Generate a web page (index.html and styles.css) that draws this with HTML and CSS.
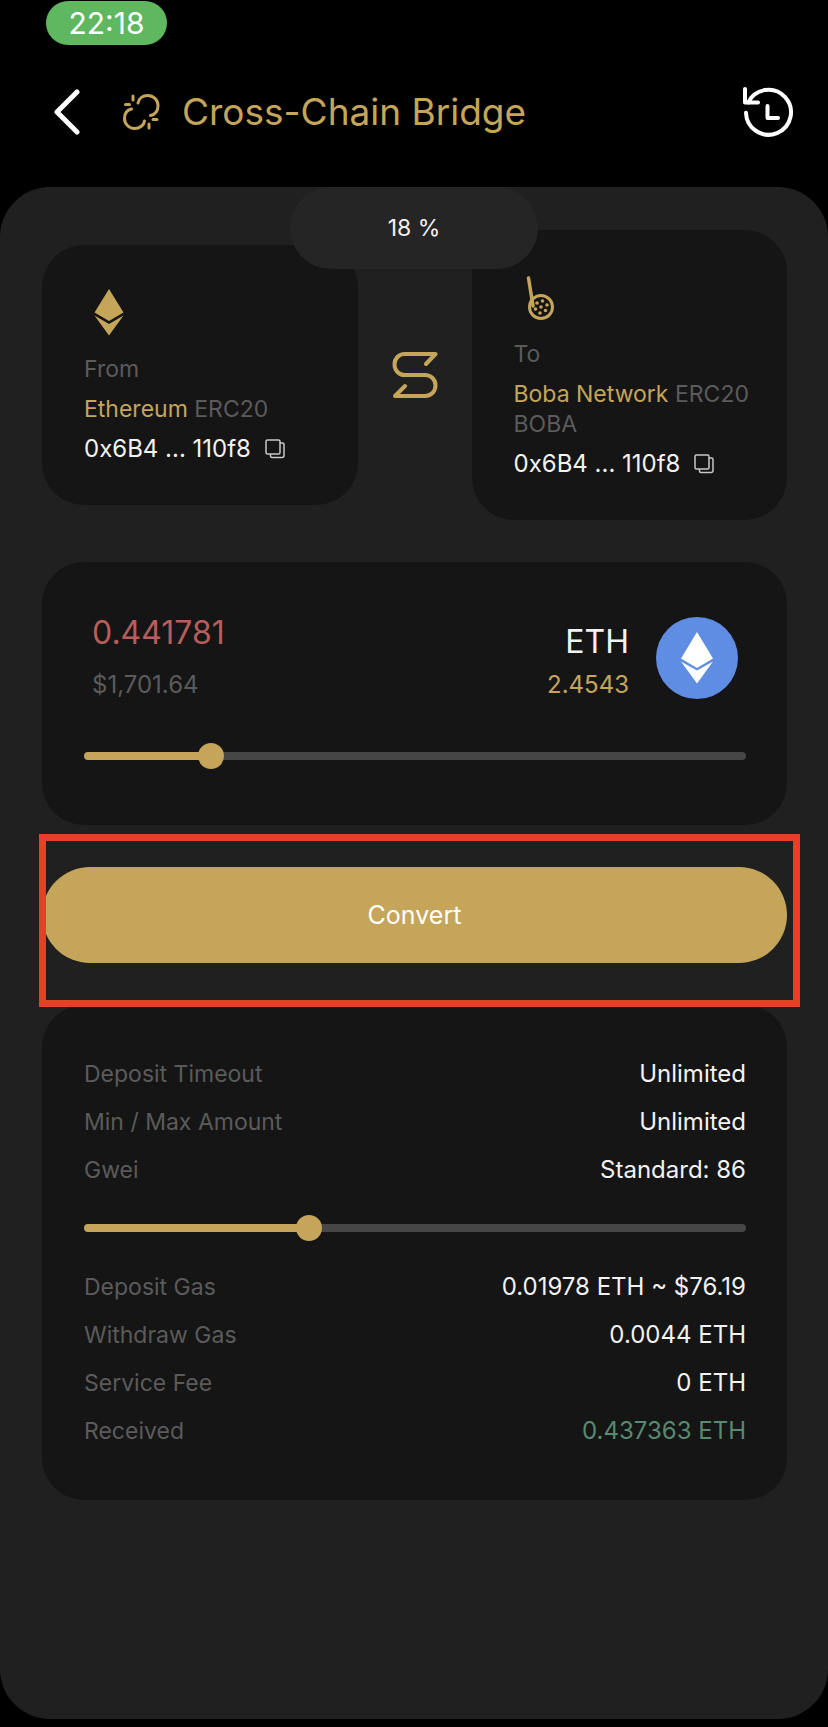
FILE: index.html
```
<!DOCTYPE html>
<html lang="en">
<head>
<meta charset="utf-8">
<meta name="viewport" content="width=device-width, initial-scale=1">
<title>Cross-Chain Bridge</title>
<link rel="stylesheet" href="styles.css">
</head>
<body>
<div class="status-bar"><time class="clock">22:18</time></div>
<header class="header">
  <button class="icon-button" type="button" aria-label="Back">
    <svg width="26" height="46" viewBox="0 0 26 46" fill="none" stroke="#fff" stroke-width="5" stroke-linecap="round" stroke-linejoin="round"><path d="M23 3 3 23l20 20"/></svg>
  </button>
  <svg class="link-icon" width="38" height="38" viewBox="0 0 38 38" fill="none" stroke="#c5a55a" stroke-width="3" stroke-linecap="round" aria-hidden="true">
    <path d="M16 10C17 5 21 2.500 25.500 2.500C31.500 2.500 36 7 36 12.500C36 18 33 21.500 28.500 22.500"/>
    <path d="M9.500 16C5 17 2.500 20.500 2.500 25.500C2.500 31 7 35.500 12.500 35.500C18 35.500 22 32 22.500 28"/>
    <path d="M11 3v4M3.500 11.500h4M27 31v4M31 26.500h4"/>
  </svg>
  <h1 class="title">Cross-Chain Bridge</h1>
  <button class="icon-button history" type="button" aria-label="History">
    <svg width="52" height="52" viewBox="0 0 52 52" fill="none" stroke="#fff" stroke-width="4" stroke-linecap="round" stroke-linejoin="round">
      <path d="M4 26.700A22.500 22.500 0 1 0 6.200 16.500"/><path d="M3 3v13.500h13"/><path d="M25.500 20v12H36"/>
    </svg>
  </button>
</header>
<main class="panel">
  <output class="percent" for="amount-slider">18 %</output>
  <section class="route">
    <article class="card chain">
      <svg class="chain-icon" width="48" height="48" viewBox="0 0 48 48" fill="#c5a55a" aria-hidden="true"><path d="M25 1 39.500 24.500 25 33 10.500 24.500Z"/><path d="M10.500 27.500 25 36l14.500-8.500L25 47.500Z"/></svg>
      <p class="muted">From</p>
      <p class="chain-name"><span class="gold">Ethereum</span> <span class="muted">ERC20</span></p>
      <p class="address">0x6B4 ... 110f8
        <button class="icon-button" type="button" aria-label="Copy sender address"><svg width="20" height="20" viewBox="0 0 20 20" fill="none" stroke="#c8c8c8" stroke-width="1.500" stroke-linejoin="round"><rect x="1" y="1" width="14" height="14" rx="1.500"/><path d="M15 4h2.500a1.500 1.500 0 0 1 1.500 1.500V16.500a2 2 0 0 1-2 2H7a1.500 1.500 0 0 1-1.500-1.500V15"/></svg></button>
      </p>
    </article>
    <button class="icon-button swap" type="button" aria-label="Swap direction">
      <svg width="46" height="48" viewBox="0 0 46 48" fill="none" stroke="#c5a55a" stroke-width="4" stroke-linecap="round" stroke-linejoin="round"><path d="M34 13 43.500 3H12.500C7 3 2.500 7.500 2.500 13.500S7 24 12.500 24h20.500C39 24 43.500 28.500 43.500 34.500S39 45 33 45H3L13 35"/></svg>
    </button>
    <article class="card chain">
      <svg class="chain-icon" width="48" height="48" viewBox="0 0 48 48" fill="none" stroke="#c5a55a" aria-hidden="true"><circle cx="27" cy="34" r="11.500" stroke-width="3"/><path d="M14.500 5 19 33" stroke-width="3.500" stroke-linecap="round"/><g fill="#c5a55a" stroke="none"><circle cx="23" cy="30" r="1.800"/><circle cx="28.500" cy="28" r="1.800"/><circle cx="33" cy="32" r="1.800"/><circle cx="27" cy="34" r="1.800"/><circle cx="21.500" cy="36" r="1.800"/><circle cx="31.500" cy="37.500" r="1.800"/><circle cx="26" cy="40" r="1.800"/></g></svg>
      <p class="muted">To</p>
      <p class="chain-name"><span class="gold">Boba Network</span> <span class="muted">ERC20<br>BOBA</span></p>
      <p class="address">0x6B4 ... 110f8
        <button class="icon-button" type="button" aria-label="Copy recipient address"><svg width="20" height="20" viewBox="0 0 20 20" fill="none" stroke="#c8c8c8" stroke-width="1.500" stroke-linejoin="round"><rect x="1" y="1" width="14" height="14" rx="1.500"/><path d="M15 4h2.500a1.500 1.500 0 0 1 1.500 1.500V16.500a2 2 0 0 1-2 2H7a1.500 1.500 0 0 1-1.500-1.500V15"/></svg></button>
      </p>
    </article>
  </section>

  <section class="card block">
    <div class="amount">
      <div class="amount-entry">
        <input class="amount-input" type="text" inputmode="decimal" value="0.441781" aria-label="Amount">
        <span class="fiat">$1,701.64</span>
      </div>
      <div class="token">
        <span class="token-name">ETH</span>
        <span class="gold">2.4543</span>
      </div>
      <svg class="coin" width="82" height="82" viewBox="0 0 82 82" aria-hidden="true"><circle cx="41" cy="41" r="41" fill="#5f8de3"/><path fill="#fff" d="M41 15 57 41.500 41 51 25 41.500Z"/><path fill="#fff" d="M25 44.500 41 53.500l16-9L41 66.500Z"/></svg>
    </div>
    <input class="slider amount-slider" id="amount-slider" type="range" min="0" max="100" value="18" style="--fill: 18%" aria-label="Share of balance">
  </section>

  <div class="action">
    <button class="convert" type="button">Convert</button>
    <div class="highlight"></div>
  </div>

  <section class="card block">
    <dl class="details">
      <div class="row"><dt>Deposit Timeout</dt><dd>Unlimited</dd></div>
      <div class="row"><dt>Min / Max Amount</dt><dd>Unlimited</dd></div>
      <div class="row"><dt>Gwei</dt><dd>Standard: 86</dd></div>
    </dl>
    <input class="slider gas-slider" type="range" min="0" max="258" value="86" style="--fill: 33%" aria-label="Gwei">
    <dl class="details">
      <div class="row"><dt>Deposit Gas</dt><dd>0.01978 ETH ~ $76.19</dd></div>
      <div class="row"><dt>Withdraw Gas</dt><dd>0.0044 ETH</dd></div>
      <div class="row"><dt>Service Fee</dt><dd>0 ETH</dd></div>
      <div class="row"><dt>Received</dt><dd class="green">0.437363 ETH</dd></div>
    </dl>
  </section>
</main>
</body>
</html>
```
FILE: styles.css
```
* {
  box-sizing: border-box;
  margin: 0;
  padding: 0;
}

body {
  display: flex;
  flex-direction: column;
  min-height: 100vh;
  padding-bottom: 8px;
  background: #000;
  color: #f2f2f2;
  font-family: Inter, "Liberation Sans", sans-serif;
  font-size: 24px;
  line-height: 30px;
}

button,
input {
  border: 0;
  background: none;
  color: inherit;
  font: inherit;
}

svg {
  display: block;
  flex: none;
}

.status-bar {
  padding: 1px 46px 0;
}

.clock {
  display: block;
  width: 121px;
  border-radius: 22px;
  background: #5fb760;
  color: #fff;
  font-size: 30px;
  line-height: 44px;
  text-align: center;
}

.header {
  display: flex;
  align-items: center;
  height: 88px;
  margin: 23px 0 31px;
  padding: 0 34px 0 54px;
}

.icon-button {
  flex: none;
  cursor: pointer;
}

.link-icon {
  margin: 0 22px 0 42px;
}

.title {
  color: #c5a55a;
  font-size: 37px;
  font-weight: 400;
  line-height: 48px;
  white-space: nowrap;
}

.history {
  margin-left: auto;
}

.panel {
  position: relative;
  display: flex;
  flex: 1;
  flex-direction: column;
  gap: 42px;
  padding: 43px 41px 42px 42px;
  border-radius: 50px;
  background: #202020;
}

.percent {
  position: absolute;
  top: 0;
  left: 50%;
  width: 248px;
  border-radius: 41px;
  background: #252525;
  font-size: 23px;
  line-height: 82px;
  text-align: center;
  transform: translateX(-50%);
}

.card {
  border-radius: 42px;
  background: #151515;
}

.route {
  display: grid;
  grid-template-columns: 1fr 46px 1fr;
  gap: 34px;
  align-items: center;
}

.chain {
  display: flex;
  flex-direction: column;
  gap: 10px;
  min-width: 0;
  padding: 43px 41px 41px 42px;
  font-size: 23px;
  white-space: nowrap;
}

.chain-icon {
  margin-bottom: 8px;
}

.muted {
  color: #5b5b5b;
}

.gold {
  color: #c5a55a;
}

.green {
  color: #578a70;
}

.address {
  display: flex;
  align-items: center;
  gap: 14px;
  font-size: 24px;
}

.block {
  padding: 54px 41px 54px 42px;
}

.amount {
  display: flex;
  align-items: center;
  padding: 0 8px;
}

.amount-entry {
  display: flex;
  flex: 1;
  flex-direction: column;
  gap: 22px;
  min-width: 0;
}

.amount-input {
  width: 100%;
  height: 32px;
  color: #b95c5c;
  font-size: 32px;
  line-height: 32px;
}

.fiat {
  color: #5b5b5b;
}

.token {
  display: flex;
  flex-direction: column;
  gap: 8px;
  align-self: flex-end;
  text-align: right;
}

.token-name {
  font-size: 32px;
  line-height: 40px;
}

.coin {
  margin-left: 27px;
}

.slider {
  display: block;
  width: 100%;
  height: 26px;
  appearance: none;
}

.slider::-webkit-slider-runnable-track {
  height: 8px;
  border-radius: 4px;
  background: linear-gradient(to right, #c5a55a var(--fill), #464646 var(--fill));
}

.slider::-webkit-slider-thumb {
  width: 26px;
  height: 26px;
  margin-top: -9px;
  border-radius: 50%;
  background: #c5a55a;
  appearance: none;
}

.amount-slider {
  margin: 43px 0 2px;
}

.gas-slider {
  margin: 30px 0 31px;
}

.action {
  position: relative;
}

.convert {
  display: block;
  width: 100%;
  height: 96px;
  border-radius: 48px;
  background: #c5a55a;
  color: #fff;
  font-size: 25px;
}

.highlight {
  position: absolute;
  inset: -33px -13px -44px -3px;
  border: 7px solid #e84027;
  pointer-events: none;
}

.details {
  display: flex;
  flex-direction: column;
  gap: 18px;
}

.row {
  display: flex;
  justify-content: space-between;
}

.row dt {
  color: #5b5b5b;
  font-size: 23px;
}
```
